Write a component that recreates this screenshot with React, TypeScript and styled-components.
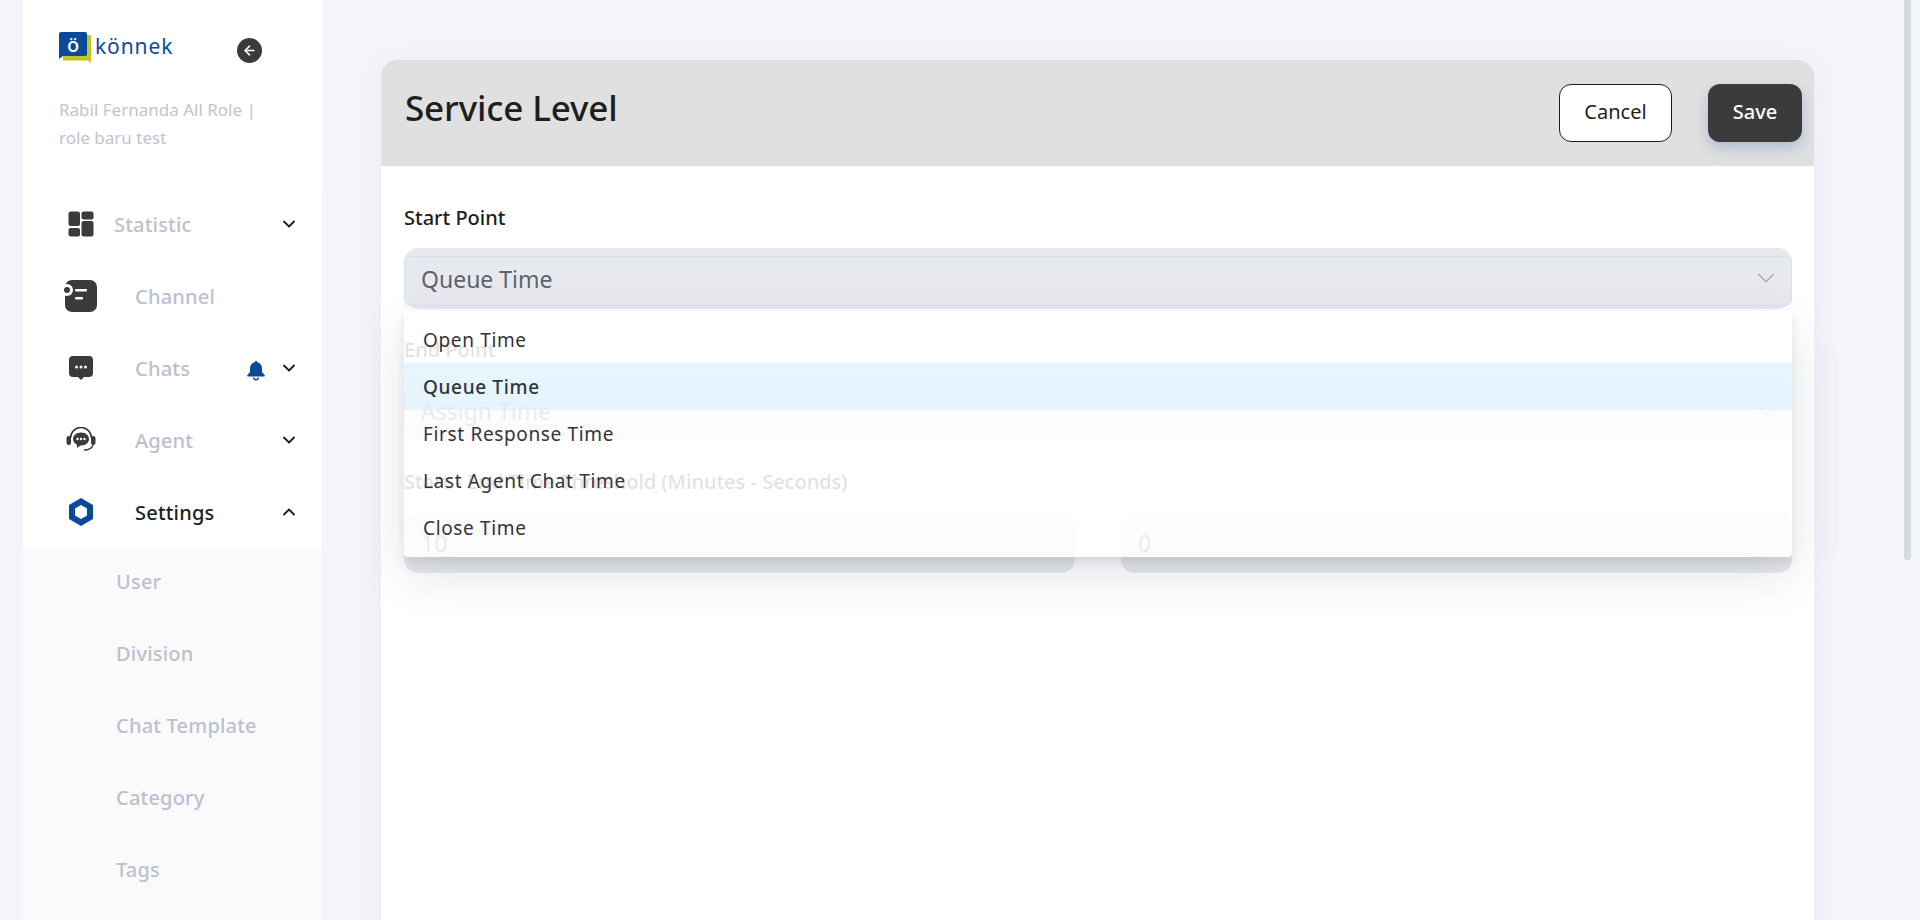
import React from 'react';
import styled, { createGlobalStyle } from 'styled-components';
import { ArrowLeft, ChevronDown, ChevronUp } from 'lucide-react';

const FONT = `'Noto Sans', 'Open Sans', sans-serif`;

const GlobalStyle = createGlobalStyle`
  html { background: #f4f5fa; }
  body { margin: 0; font-family: ${FONT}; background: #f4f5fa; }
`;

const Page = styled.div`
  display: grid;
  grid-template-columns: 300px 1fr;
  column-gap: 58px;
  height: 100vh;
  overflow: hidden;
  padding-left: 23px;
`;

const ScrollThumb = styled.div`
  position: fixed;
  top: 0;
  right: 9px;
  width: 7px;
  height: 560px;
  background: #d3dce0;
  border-radius: 0 0 3px 3px;
`;

const Sidebar = styled.aside`
  background: #fff;
  display: flex;
  flex-direction: column;
`;

const Brand = styled.div`
  display: flex;
  align-items: flex-start;
  box-sizing: border-box;
  padding: 32px 0 0 36px;
  height: 96px;
`;

const LogoText = styled.span`
  font-size: 21px;
  line-height: 28px;
  letter-spacing: 0.9px;
  color: #0f4c96;
  margin-left: 4px;
`;

const BackButton = styled.button`
  width: 25px;
  height: 25px;
  border-radius: 50%;
  border: 0;
  padding: 0;
  margin: 6px 61px 0 auto;
  background: #3b3b3b;
  color: #fff;
  display: flex;
  align-items: center;
  justify-content: center;
`;

const UserName = styled.div`
  margin: 0 0 36px 36px;
  width: 230px;
  height: 56px;
  font-size: 17px;
  line-height: 28px;
  color: #bfc3d2;
`;

const Nav = styled.nav`
  display: flex;
  flex-direction: column;
  border-right: 1px solid #f2f3f7;
`;

const NavRow = styled.div`
  height: 72px;
  display: flex;
  align-items: center;
  padding: 0 23px 0 38px;
`;

const NavIcon = styled.span`
  width: 40px;
  flex: none;
  display: flex;
  justify-content: center;
`;

const NavLabel = styled.span<{ $active?: boolean; $indent: number }>`
  font-size: 20px;
  font-weight: 500;
  letter-spacing: 0.2px;
  color: ${({ $active }) => ($active ? '#1e1e1e' : '#bcc0cf')};
  margin-left: ${({ $indent }) => $indent}px;
  flex: 1;
`;

const Caret = styled.span`
  display: flex;
  color: #1e1e1e;
  margin-top: -1px;
`;

const BellSlot = styled.span`
  display: flex;
  margin: 6px 14px 0 0;
`;

const SubNav = styled.div`
  flex: 1;
  background: #fafafa;
  padding: 0 24px 0 93px;
  display: flex;
  flex-direction: column;
  border-right: 1px solid #f2f3f7;
`;

const SubRow = styled.div`
  height: 72px;
  flex: none;
  box-sizing: border-box;
  border-bottom: 1px solid #f4f4f4;
  display: flex;
  align-items: center;
  padding-top: 13px;

  &:first-child {
    height: 64px;
    padding-top: 5px;
  }
`;

const SubText = styled.span`
  font-size: 20px;
  font-weight: 500;
  letter-spacing: 0.2px;
  color: #bcc0cf;
  border-bottom: 1px solid #f4f4f6;
`;

const Main = styled.main`
  padding: 60px 106px 0 0;
`;

const Card = styled.section`
  background: #fff;
  border-radius: 16px 16px 0 0;
  box-shadow: 0 4px 30px rgba(120, 130, 170, 0.07);
  height: 1451px;
  position: relative;
`;

const CardHeader = styled.header`
  height: 106px;
  background: #e0e0e0;
  border-radius: 16px 16px 0 0;
  display: flex;
  align-items: flex-start;
  padding: 24px 12px 0 24px;
  box-sizing: border-box;
`;

const Title = styled.h1`
  margin: 1px 0 0;
  flex: 1;
  font-size: 35px;
  line-height: 46px;
  font-weight: 500;
  letter-spacing: -0.15px;
  color: #1e1e1e;
`;

const Button = styled.button<{ $primary?: boolean }>`
  height: 58px;
  width: ${({ $primary }) => ($primary ? 94 : 113)}px;
  margin-left: ${({ $primary }) => ($primary ? 36 : 0)}px;
  padding: 0 0 3px;
  border-radius: 12px;
  border: ${({ $primary }) => ($primary ? '0' : '1px solid #1e1e1e')};
  background: ${({ $primary }) => ($primary ? '#3b3b3b' : '#fff')};
  color: ${({ $primary }) => ($primary ? '#fff' : '#1e1e1e')};
  box-shadow: ${({ $primary }) => ($primary ? '0 6px 14px rgba(90, 120, 190, 0.35)' : 'none')};
  font-family: ${FONT};
  font-size: 20px;
  font-weight: ${({ $primary }) => ($primary ? 500 : 400)};
`;

const Form = styled.div`
  padding: 37px 22px 0 23px;
  display: flex;
  flex-direction: column;
  gap: 26px;
  position: relative;
`;

const Field = styled.div`
  display: flex;
  flex-direction: column;
`;

const Label = styled.label`
  height: 30px;
  line-height: 30px;
  margin-bottom: 15px;
  font-size: 20px;
  font-weight: 500;
  color: #1e1e1e;
`;

const Select = styled.div<{ $focused?: boolean }>`
  position: relative;
  height: 61px;
  box-sizing: border-box;
  background: #e8e9ef;
  border-radius: 14px;
  display: flex;
  align-items: center;
  justify-content: space-between;
  padding: 0 11px 0 17px;
  font-size: 23px;
  color: #5f636f;

  ${({ $focused }) =>
    $focused &&
    `&::after {
      content: '';
      position: absolute;
      inset: 8px 0 3px 0;
      border: 1px solid #d3e3f6;
      border-radius: 6px;
    }`}
`;

const SelectCaret = styled.span`
  display: flex;
  margin-top: -2px;
  color: #a3a6ad;
`;

const TwoCols = styled.div`
  display: grid;
  grid-template-columns: 1fr 1fr;
  gap: 46px;
`;

const Menu = styled.ul`
  position: absolute;
  left: 23px;
  right: 22px;
  top: 145px;
  margin: 0;
  padding: 5px 0 6px;
  list-style: none;
  background: rgba(255, 255, 255, 0.87);
  border-radius: 0 0 4px 4px;
  box-shadow: 0 18px 50px rgba(60, 65, 90, 0.14), 0 6px 10px rgba(60, 65, 90, 0.1);
`;

const MenuItem = styled.li<{ $selected?: boolean }>`
  height: 47px;
  line-height: 49px;
  padding-left: 19px;
  font-size: 19px;
  letter-spacing: 0.65px;
  color: #32343c;
  font-weight: ${({ $selected }) => ($selected ? 500 : 400)};
  background: ${({ $selected }) => ($selected ? 'rgba(212, 239, 253, 0.55)' : 'transparent')};
`;

const StatisticIcon = () => (
  <svg width="26" height="26" viewBox="0 0 26 26" fill="#3b3b3b">
    <rect x="0.5" y="0.5" width="11.5" height="14.5" rx="2" />
    <rect x="13.5" y="0.5" width="12" height="8" rx="2" />
    <rect x="0.5" y="17" width="11.5" height="8.5" rx="2" />
    <rect x="13.5" y="10" width="12" height="15.5" rx="2" />
  </svg>
);

const ChannelIcon = () => (
  <svg width="34" height="34" viewBox="0 0 34 34">
    <rect x="1" y="1" width="32" height="32" rx="7" fill="#3b3b3b" />
    <circle cx="3" cy="11" r="6" fill="#fff" />
    <circle cx="3" cy="11" r="3" fill="#3b3b3b" />
    <rect x="11" y="10" width="12" height="2.5" rx="1" fill="#fff" />
    <rect x="11" y="18" width="8" height="2.5" rx="1" fill="#fff" />
  </svg>
);

const ChatIcon = () => (
  <svg width="24" height="25" viewBox="0 0 24 25">
    <path d="M4 0h16a4 4 0 0 1 4 4v13a4 4 0 0 1-4 4h-5l-3 3-3-3H4a4 4 0 0 1-4-4V4a4 4 0 0 1 4-4z" fill="#3b3b3b" />
    <circle cx="7.5" cy="11" r="1.5" fill="#fff" />
    <circle cx="12" cy="11" r="1.5" fill="#fff" />
    <circle cx="16.5" cy="11" r="1.5" fill="#fff" />
  </svg>
);

const AgentIcon = () => (
  <svg width="30" height="26" viewBox="0 0 30 26" fill="none">
    <path d="M4.5 11a10.5 10.5 0 0 1 21 0" stroke="#3b3b3b" strokeWidth="1.6" />
    <rect x="0.5" y="9" width="4.5" height="9" rx="2.2" fill="#3b3b3b" />
    <rect x="25" y="9" width="4.5" height="9" rx="2.2" fill="#3b3b3b" />
    <path d="M15 5.5c4.6 0 8 2.9 8 6.5s-3.4 6.5-8 6.5h-.5L11 21v-3.2c-2.4-1.1-4-3.2-4-5.8 0-3.6 3.400-6.5 8-6.5z" fill="#3b3b3b" />
    <circle cx="11.5" cy="12" r="1.2" fill="#fff" />
    <circle cx="15" cy="12" r="1.2" fill="#fff" />
    <circle cx="18.5" cy="12" r="1.2" fill="#fff" />
    <path d="M27 18c-1 3-4 5-9 5" stroke="#3b3b3b" strokeWidth="1.4" />
  </svg>
);

const SettingsIcon = () => (
  <svg width="24" height="28" viewBox="0 0 24 28">
    <path d="M12 0l12 7v14l-12 7-12-7V7z" fill="#0b4a99" />
    <path d="M12 7l6 3.5v7L12 21l-6-3.5v-7z" fill="#fff" />
  </svg>
);

const BellIcon = () => (
  <svg width="18" height="20" viewBox="0 0 18 20" fill="#0b4a99">
    <path d="M9 0c.8 0 1.3.6 1.4 1.3C13.400 2 15 4.600 15 7.500v3.500l2.700 3.200c.4.500.1 1.300-.6 1.300H.9c-.7 0-1-.8-.6-1.300L3 11V7.500c0-2.900 1.600-5.500 4.600-6.200C7.700.6 8.200 0 9 0z" />
    <path d="M6 16.500a3 3 0 0 0 6 0h-1.500a1.500 1.500 0 0 1-3 0z" />
  </svg>
);

const LogoMark = () => (
  <svg width="32" height="32" viewBox="0 0 32 32">
    <path d="M4 3h28v28l-3-2.500H4z" fill="#c0c81f" />
    <path d="M2 0h24a2 2 0 0 1 2 2v20a2 2 0 0 1-2 2H4l-4 3V2a2 2 0 0 1 2-2z" fill="#0b4a99" />
    <text x="14" y="20" textAnchor="middle" fontSize="20" fontFamily="Noto Sans, sans-serif" fontWeight="500" fill="#fff">ö</text>
  </svg>
);

const navItems = [
  { label: 'Statistic', icon: <StatisticIcon />, indent: 13, caret: true },
  { label: 'Channel', icon: <ChannelIcon />, indent: 34, caret: false },
  { label: 'Chats', icon: <ChatIcon />, indent: 34, caret: true, bell: true },
  { label: 'Agent', icon: <AgentIcon />, indent: 34, caret: true },
];

const subItems = ['User', 'Division', 'Chat Template', 'Category', 'Tags'];
const options = ['Open Time', 'Queue Time', 'First Response Time', 'Last Agent Chat Time', 'Close Time'];

export default function App() {
  return (
    <Page>
      <GlobalStyle />
      <ScrollThumb />
      <Sidebar>
        <Brand>
          <LogoMark />
          <LogoText>könnek</LogoText>
          <BackButton aria-label="Collapse">
            <ArrowLeft size={15} strokeWidth={2.5} />
          </BackButton>
        </Brand>
        <UserName>Rabil Fernanda All Role | role baru test</UserName>
        <Nav>
          {navItems.map((item) => (
            <NavRow key={item.label}>
              <NavIcon>{item.icon}</NavIcon>
              <NavLabel $indent={item.indent}>{item.label}</NavLabel>
              {item.bell && (
                <BellSlot>
                  <BellIcon />
                </BellSlot>
              )}
              {item.caret && (
                <Caret>
                  <ChevronDown size={20} strokeWidth={2.2} />
                </Caret>
              )}
            </NavRow>
          ))}
          <NavRow>
            <NavIcon>
              <SettingsIcon />
            </NavIcon>
            <NavLabel $active $indent={34}>
              Settings
            </NavLabel>
            <Caret>
              <ChevronUp size={20} strokeWidth={2.2} />
            </Caret>
          </NavRow>
        </Nav>
        <SubNav>
          {subItems.map((item) => (
            <SubRow key={item}>
              <SubText>{item}</SubText>
            </SubRow>
          ))}
        </SubNav>
      </Sidebar>
      <Main>
        <Card>
          <CardHeader>
            <Title>Service Level</Title>
            <Button>Cancel</Button>
            <Button $primary>Save</Button>
          </CardHeader>
          <Form>
            <Field>
              <Label>Start Point</Label>
              <Select $focused>
                Queue Time
                <SelectCaret>
                  <ChevronDown size={30} strokeWidth={1} />
                </SelectCaret>
              </Select>
            </Field>
            <Field>
              <Label>End Point</Label>
              <Select>
                Assign Time
                <SelectCaret>
                  <ChevronDown size={30} strokeWidth={1} />
                </SelectCaret>
              </Select>
            </Field>
            <Field>
              <Label>Start - End Time Threshold (Minutes - Seconds)</Label>
              <TwoCols>
                <Select>10</Select>
                <Select>0</Select>
              </TwoCols>
            </Field>
            <Menu>
              {options.map((option) => (
                <MenuItem key={option} $selected={option === 'Queue Time'}>
                  {option}
                </MenuItem>
              ))}
            </Menu>
          </Form>
        </Card>
      </Main>
    </Page>
  );
}
